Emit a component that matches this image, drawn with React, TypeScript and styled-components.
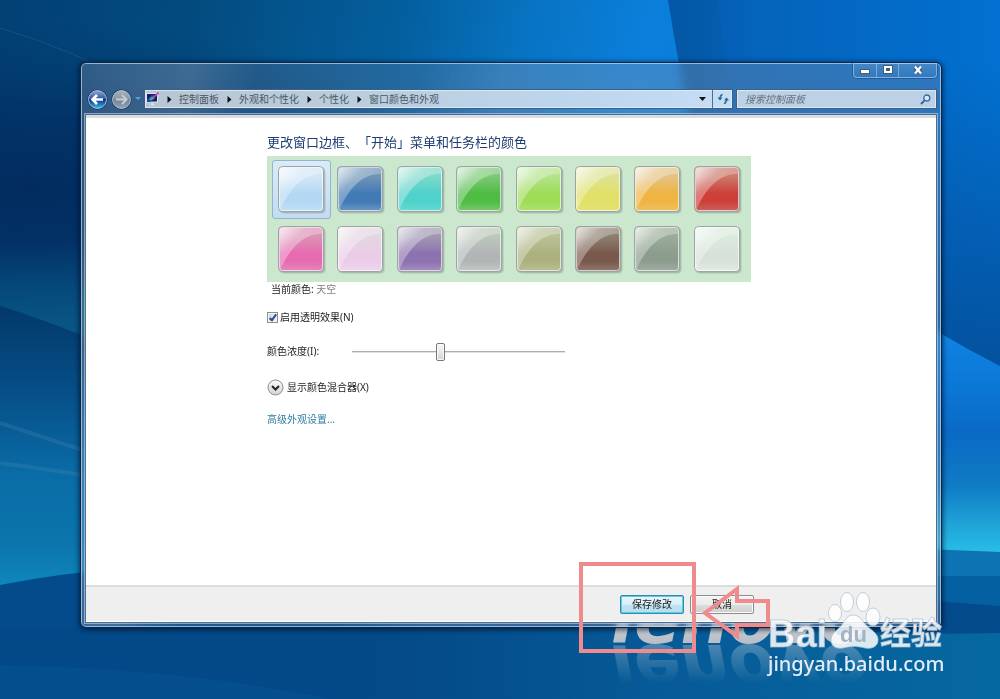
import React, { useState } from 'react';
import styled, { createGlobalStyle } from 'styled-components';

const GlobalStyle = createGlobalStyle`
  *, *::before, *::after { box-sizing: border-box; }
  body {
    margin: 0;
    font-family: "Noto Sans", "Noto Sans CJK SC", sans-serif;
    font-size: 10px;
    line-height: 14px;
    color: #1c1c1c;
  }
  button, input { font: inherit; color: inherit; }
`;

const Desktop = styled.div`
  position: relative;
  display: flex;
  flex-direction: column;
  min-height: 100vh;
  padding: 62px 58px 71px 80px;
  overflow: hidden;
  background: #04508f;
`;

const WallpaperSvg = styled.svg`
  position: absolute;
  inset: 0;
  width: 100%;
  height: 100%;
`;

const Window = styled.main`
  position: relative;
  flex: 1;
  display: flex;
  flex-direction: column;
  padding: 0 4px 4px;
  border: 1px solid #0c2748;
  border-radius: 6px;
  background:
    linear-gradient(98deg, rgba(255, 255, 255, 0.08) 0, rgba(255, 255, 255, 0.14) 110px, rgba(255, 255, 255, 0.01) 175px, rgba(255, 255, 255, 0.02) 340px, rgba(255, 255, 255, 0.1) 420px, rgba(255, 255, 255, 0.06) 100%),
    rgba(100, 120, 150, 0.28);
  backdrop-filter: blur(5px);
  box-shadow:
    inset 0 0 0 1px rgba(190, 220, 245, 0.7),
    0 1px 5px 1px rgba(0, 10, 35, 0.65);
`;

const Caption = styled.div`
  display: flex;
  justify-content: flex-end;
`;

const CaptionGroup = styled.div`
  display: flex;
  border: 1px solid rgba(190, 215, 240, 0.6);
  border-top: 0;
  border-radius: 0 0 4px 4px;
  box-shadow: 0 0 0 1px rgba(10, 40, 90, 0.35);
`;

const CaptionButton = styled.button<{ $wide?: boolean }>`
  display: flex;
  align-items: center;
  justify-content: center;
  width: ${(p) => (p.$wide ? 38 : 22)}px;
  height: 14px;
  padding: 0;
  border: 0;
  background: linear-gradient(rgba(255, 255, 255, 0.12), rgba(255, 255, 255, 0.02));
  & + & { border-left: 1px solid rgba(190, 215, 240, 0.5); }
`;

const NavBar = styled.nav`
  display: flex;
  align-items: center;
  gap: 3px;
  height: 20px;
  margin: 11px 0 5px;
  padding-left: 2px;
`;

const TravelGroup = styled.div`
  display: flex;
  align-items: center;
  gap: 3px;
`;

const TravelButton = styled.button`
  display: flex;
  width: 21px;
  height: 21px;
  padding: 0;
  border: 0;
  background: none;
`;

const RecentButton = styled.button`
  display: flex;
  align-items: center;
  width: 6px;
  height: 20px;
  padding: 0;
  border: 0;
  background: none;
`;

const AddressBar = styled.div`
  flex: 1;
  display: flex;
  align-items: stretch;
  height: 20px;
  padding-left: 1px;
  border: 1px solid #3c5f83;
  background: linear-gradient(90deg, #b7c6d5, #bacddd 35%, #bdd6ee 75%, #c5def6);
  box-shadow: inset 0 0 0 1px rgba(235, 245, 255, 0.65);
`;

const Crumbs = styled.ol`
  flex: 1;
  display: flex;
  align-items: center;
  margin: 0;
  padding: 0;
  list-style: none;
`;

const Crumb = styled.li`
  display: flex;
  align-items: center;
  white-space: nowrap;
`;

const CrumbLink = styled.a`
  color: #4c5864;
  text-decoration: none;
`;

const AddressButton = styled.button<{ $divided?: boolean }>`
  display: flex;
  align-items: center;
  justify-content: center;
  width: 20px;
  padding: 0;
  border: 0;
  border-left: ${(p) => (p.$divided ? '1px solid #4d6f92' : '0')};
  background: none;
`;

const SearchBox = styled.label`
  display: flex;
  align-items: center;
  width: 201px;
  height: 20px;
  padding: 0 5px 0 8px;
  border: 1px solid #3c5f83;
  background: #bdd1e6;
  box-shadow: inset 0 0 0 1px rgba(235, 245, 255, 0.65);
`;

const SearchInput = styled.input`
  flex: 1;
  min-width: 0;
  padding: 0;
  border: 0;
  outline: 0;
  background: none;
  font-style: italic;
  &::placeholder { color: #66727e; opacity: 1; }
`;

const Client = styled.section`
  flex: 1;
  display: flex;
  flex-direction: column;
  border: 1px solid #4f6c8c;
  background: #fff;
  box-shadow: 0 0 0 1px rgba(190, 220, 245, 0.6), inset 0 3px 0 #dbdcde;
`;

const Content = styled.div`
  flex: 1;
  padding: 18px 16px 18px 181px;
`;

const Heading = styled.h1`
  margin: 0 0 5px;
  font-size: 13px;
  font-weight: 400;
  line-height: 18px;
  color: #1d3d72;
  text-spacing-trim: space-all;
`;

const Palette = styled.div`
  display: grid;
  grid-template-columns: repeat(8, 1fr);
  grid-auto-rows: 59px;
  row-gap: 1px;
  max-width: 484px;
  padding: 4px 4px 3px 5px;
  background: #cbe7cd;
`;

const SwatchButton = styled.button<{ $selected: boolean }>`
  display: flex;
  align-items: center;
  justify-content: center;
  width: 59px;
  padding: 0;
  border: 1px solid ${(p) => (p.$selected ? '#8fb5d3' : 'transparent')};
  border-radius: 3px;
  background: ${(p) => (p.$selected ? 'linear-gradient(#dcebf5, #c2dcf0)' : 'none')};
`;

const CurrentColor = styled.p`
  margin: 0 0 13px;
  padding-left: 4px;
`;

const Muted = styled.span`
  color: #808080;
`;

const CheckRow = styled.label`
  display: flex;
  align-items: center;
  gap: 2px;
  width: fit-content;
  height: 16px;
`;

const CheckBox = styled.input`
  display: grid;
  place-items: center;
  appearance: none;
  width: 11px;
  height: 11px;
  margin: 1px 0 0;
  border: 1px solid #8a8f94;
  background: linear-gradient(135deg, #c9d2de, #f3f6fa);
  box-shadow: inset 0 0 0 1px #f4f4f4;
  &:checked::before {
    content: "";
    width: 4px;
    height: 8px;
    margin-bottom: 2px;
    border: solid #2f4c94;
    border-width: 0 2px 2px 0;
    transform: rotate(38deg);
  }
`;

const SliderRow = styled.div`
  display: flex;
  align-items: center;
  height: 18px;
  margin: 17px 0 18px;
`;

const SliderLabel = styled.label`
  width: 85px;
`;

const Slider = styled.input`
  appearance: none;
  width: 213px;
  height: 18px;
  margin: 2px 0 0;
  background: none;
  &::-webkit-slider-runnable-track {
    height: 2px;
    border-top: 1px solid #a9afac;
    background: #dfe4e1;
  }
  &::-webkit-slider-thumb {
    appearance: none;
    width: 9px;
    height: 18px;
    margin-top: -9px;
    border: 1px solid #777;
    border-radius: 2px;
    background: linear-gradient(#f6f6f6, #e9e9e9 50%, #d0d0d0);
    box-shadow: inset 0 0 0 1px #fbfbfb;
  }
`;

const ExpandButton = styled.button`
  display: flex;
  align-items: center;
  gap: 3px;
  height: 18px;
  margin: 0 0 14px;
  padding: 0;
  border: 0;
  background: none;
`;

const AdvancedLink = styled.a`
  display: block;
  width: fit-content;
  line-height: 18px;
  color: #2f7d9f;
  text-decoration: none;
`;

const Footer = styled.footer`
  display: flex;
  align-items: center;
  justify-content: flex-end;
  gap: 6px;
  height: 37px;
  padding-right: 182px;
  border-top: 2px solid #dcdcdc;
  border-bottom: 1px solid #fff;
  background: #efefef;
`;

const DialogButton = styled.button<{ $primary?: boolean }>`
  width: 64px;
  height: 19px;
  padding: 0;
  border: 1px solid ${(p) => (p.$primary ? '#2f8cab' : '#8c8c8c')};
  border-radius: 2px;
  line-height: 14px;
  background: ${(p) =>
    p.$primary
      ? 'linear-gradient(#eaf6fb, #d8eef8 50%, #bfe3f2 50%, #b4def0)'
      : 'linear-gradient(#f3f3f3, #ebebeb 50%, #dddddd 50%, #cfcfcf)'};
  box-shadow: inset 0 0 0 1px ${(p) => (p.$primary ? '#5cc8ea' : '#fafafa')};
`;

const Highlight = styled.div`
  position: absolute;
  right: 304px;
  bottom: 46px;
  width: 117px;
  height: 91px;
  border: 4px solid #f08b8d;
`;

const ArrowSvg = styled.svg`
  position: absolute;
  right: 228px;
  bottom: 57px;
`;

const Watermark = styled.svg`
  position: absolute;
  right: 50px;
  bottom: 14px;
`;

const COLORS = [
  { name: '天空', top: '#d3e7f7', main: '#b4d8f4', low: '#c4e0f6' },
  { name: '黄昏', top: '#6f95b6', main: '#427ab6', low: '#6b98c4' },
  { name: '大海', top: '#7ed9c9', main: '#4fd2cb', low: '#66dad2' },
  { name: '叶', top: '#7cc878', main: '#4fbc43', low: '#7ccb72' },
  { name: '酸橙', top: '#b3e38c', main: '#9fdd58', low: '#aee172' },
  { name: '太阳', top: '#dce394', main: '#e1e068', low: '#e3e37a' },
  { name: '南瓜', top: '#e3c384', main: '#efb442', low: '#ecc264' },
  { name: '红宝石', top: '#cb7a6c', main: '#ce3f3a', low: '#c9655c' },
  { name: '倒挂金钟', top: '#dc93b4', main: '#e76bb0', low: '#e48abb' },
  { name: '腮红', top: '#e3d6e0', main: '#ebcce8', low: '#efd7ec' },
  { name: '紫罗兰', top: '#a298b3', main: '#8d72b0', low: '#a78fc0' },
  { name: '淡紫色', top: '#bcc8bc', main: '#b2b5b6', low: '#c3cbc5' },
  { name: '灰褐', top: '#b9c196', main: '#acb17f', low: '#bcc193' },
  { name: '巧克力', top: '#8c8070', main: '#79594c', low: '#917a6c' },
  { name: '石板', top: '#9aad99', main: '#8c9c8e', low: '#a1b0a2' },
  { name: '霜', top: '#dcebde', main: '#d8e1d9', low: '#e2ece3' },
];

function SwatchTile({ index }: { index: number }) {
  const c = COLORS[index];
  return (
    <svg width="51" height="51" viewBox="-2 -2 51 51" aria-hidden="true">
      <defs>
        <linearGradient id={`fill${index}`} x1="0" y1="0" x2="0" y2="1">
          <stop offset="0" stopColor={c.top} />
          <stop offset="0.22" stopColor={c.top} />
          <stop offset="0.6" stopColor={c.main} />
          <stop offset="0.78" stopColor={c.main} />
          <stop offset="1" stopColor={c.low} />
        </linearGradient>
        <linearGradient id={`gloss${index}`} x1="0" y1="0" x2="0.75" y2="0.75">
          <stop offset="0" stopColor="#fff" stopOpacity="0.8" />
          <stop offset="0.4" stopColor="#fff" stopOpacity="0.34" />
          <stop offset="1" stopColor="#fff" stopOpacity="0.2" />
        </linearGradient>
      </defs>
      <rect x="2" y="2" width="46" height="46" rx="5" fill="#5a6a60" opacity="0.14" />
      <rect x="1" y="1" width="46" height="46" rx="4" fill="#5a6a60" opacity="0.22" />
      <rect x="0.5" y="0.5" width="45" height="45" rx="4" fill={`url(#fill${index})`} stroke="#9ba5a3" />
      <path d="M2 44V4q0-2 2-2h38q2 0 2 2v4C26 7 12 22 2 44Z" fill={`url(#gloss${index})`} />
      <rect x="1.5" y="1.5" width="43" height="43" rx="3" fill="none" stroke="#fff" strokeOpacity="0.65" />
    </svg>
  );
}

function Wallpaper() {
  return (
    <WallpaperSvg viewBox="0 0 1000 699" preserveAspectRatio="none" aria-hidden="true">
      <defs>
        <linearGradient id="sky" gradientUnits="userSpaceOnUse" x1="0" y1="0" x2="980" y2="200">
          <stop offset="0" stopColor="#024074" />
          <stop offset="0.2" stopColor="#034c80" />
          <stop offset="0.4" stopColor="#045f9e" />
          <stop offset="0.52" stopColor="#0873c2" />
          <stop offset="0.64" stopColor="#0b7fdb" />
          <stop offset="1" stopColor="#0875d5" />
        </linearGradient>
        <radialGradient id="night" gradientUnits="userSpaceOnUse" cx="0" cy="0" r="1" gradientTransform="translate(30 190) scale(430 170)">
          <stop offset="0" stopColor="#022c60" />
          <stop offset="0.4" stopColor="#022f64" stopOpacity="0.85" />
          <stop offset="1" stopColor="#02386c" stopOpacity="0" />
        </radialGradient>
        <linearGradient id="band" x1="0" y1="0" x2="1" y2="0">
          <stop offset="0" stopColor="#0457a4" />
          <stop offset="0.25" stopColor="#0560b4" />
          <stop offset="1" stopColor="#0270ce" />
        </linearGradient>
        <linearGradient id="bandFade" x1="0" y1="0" x2="0" y2="1">
          <stop offset="0" stopColor="#04509c" stopOpacity="0" />
          <stop offset="1" stopColor="#04509c" />
        </linearGradient>
        <linearGradient id="leftGlow" x1="0" y1="0" x2="0" y2="1">
          <stop offset="0" stopColor="#0a5a88" stopOpacity="0" />
          <stop offset="1" stopColor="#0a5a88" />
        </linearGradient>
        <linearGradient id="leftSea" gradientUnits="userSpaceOnUse" x1="0" y1="310" x2="0" y2="585">
          <stop offset="0" stopColor="#033a6c" />
          <stop offset="0.3" stopColor="#064f88" />
          <stop offset="0.6" stopColor="#0a6ca6" />
          <stop offset="0.85" stopColor="#0b75ac" />
          <stop offset="1" stopColor="#0f86bb" />
        </linearGradient>
        <linearGradient id="rightSea" gradientUnits="userSpaceOnUse" x1="0" y1="335" x2="0" y2="552">
          <stop offset="0" stopColor="#1083e2" />
          <stop offset="0.22" stopColor="#0b78d6" />
          <stop offset="0.45" stopColor="#0a6ac6" />
          <stop offset="0.7" stopColor="#0f7cc4" />
          <stop offset="0.9" stopColor="#22aadb" />
          <stop offset="1" stopColor="#28bce6" />
        </linearGradient>
        <linearGradient id="hill" x1="0" y1="0" x2="1" y2="0">
          <stop offset="0" stopColor="#034987" />
          <stop offset="0.4" stopColor="#044a88" />
          <stop offset="0.65" stopColor="#065a97" />
          <stop offset="1" stopColor="#0668a0" />
        </linearGradient>
        <linearGradient id="chrome" x1="0" y1="0" x2="0" y2="1">
          <stop offset="0" stopColor="#eef2f5" />
          <stop offset="1" stopColor="#a9b1ba" />
        </linearGradient>
        <linearGradient id="mirror" gradientUnits="userSpaceOnUse" x1="0" y1="0" x2="0" y2="-38">
          <stop offset="0" stopColor="#a9c0d4" stopOpacity="0.42" />
          <stop offset="1" stopColor="#a9c0d4" stopOpacity="0" />
        </linearGradient>
      </defs>
      <rect width="1000" height="699" fill="url(#sky)" />
      <rect width="500" height="400" fill="url(#night)" />
      <path d="M0 28Q70 48 150 92" fill="none" stroke="#4b83ad" strokeOpacity="0.25" />
      <path d="M668 0H1000V380H760Q700 200 668 0Z" fill="url(#band)" />
      <path d="M718 0H1000V380H780Q735 150 718 0Z" fill="#0878e0" opacity="0.14" />
      <rect x="760" y="60" width="240" height="320" fill="url(#bandFade)" />
      <path d="M0 240H120V348L0 306Z" fill="url(#leftGlow)" />
      <path d="M0 306Q40 318 80 335L400 460V600H0Z" fill="url(#leftSea)" />
      <path d="M0 423Q50 440 120 462M0 463Q40 468 120 481" fill="none" stroke="#5c93b4" strokeOpacity="0.22" strokeWidth="4" />
      <path d="M500 130Q860 290 940 333Q970 351 1000 366V560H500Z" fill="url(#rightSea)" />
      <path d="M400 548H900L1000 552V640H400Z" fill="#0d73b2" />
      <path d="M700 576H1000V640H700Z" fill="#0560a2" />
      <path d="M0 585Q60 573 130 568Q560 570 1000 606V699H0Z" fill="#044b8b" />
      <path d="M0 628H820Q900 636 1000 633V699H0Z" fill="url(#hill)" />
      <path d="M0 665Q180 668 330 699H0Z" fill="#065192" opacity="0.7" />
      <g fontFamily="DejaVu Sans" fontWeight="700" fontStyle="italic" fontSize="68" aria-hidden="true">
        <text x="611" y="643" fill="url(#chrome)">lenovo</text>
        <text transform="translate(611 645) scale(1 -1)" fill="url(#mirror)">lenovo</text>
      </g>
    </WallpaperSvg>
  );
}

function TravelIcon({ forward }: { forward?: boolean }) {
  const id = forward ? 'fwd' : 'bck';
  return (
    <svg width="21" height="21" viewBox="0 0 21 21" aria-hidden="true">
      <defs>
        <linearGradient id={id} x1="0" y1="0" x2="0" y2="1">
          <stop offset="0" stopColor={forward ? '#aab4be' : '#8ba6dd'} />
          <stop offset="0.48" stopColor={forward ? '#8795a3' : '#2c50a8'} />
          <stop offset="0.5" stopColor={forward ? '#718395' : '#0b2b86'} />
          <stop offset="1" stopColor={forward ? '#91a5b8' : '#2ec3f4'} />
        </linearGradient>
      </defs>
      <circle cx="10.5" cy="10.5" r="10" fill="#0d2a50" />
      <circle cx="10.5" cy="10.5" r="9" fill={`url(#${id})`} stroke="#c0cfdf" strokeOpacity="0.85" />
      <path
        d={forward ? 'M5 10.5H15M11 6l4.500 4.500L11 15' : 'M16 10.5H6M10 6l-4.500 4.500L10 15'}
        fill="none"
        stroke={forward ? '#c3ccd5' : '#fff'}
        strokeWidth={forward ? 2 : 2.6}
      />
    </svg>
  );
}

function Separator() {
  return (
    <svg width="20" height="9" viewBox="0 0 20 9" aria-hidden="true">
      <path d="M8.5 1v7L12.500 4.500Z" fill="#111" />
    </svg>
  );
}

const CRUMBS = ['控制面板', '外观和个性化', '个性化', '窗口颜色和外观'];

export default function App() {
  const [selected, setSelected] = useState(0);
  return (
    <>
      <GlobalStyle />
      <Desktop>
        <Wallpaper />
        <Window lang="zh-CN">
          <Caption>
            <CaptionGroup>
              <CaptionButton aria-label="最小化">
                <svg width="12" height="10" viewBox="0 0 12 10" aria-hidden="true">
                  <rect x="1.5" y="4.5" width="9" height="4" fill="#fff" stroke="#455a78" />
                </svg>
              </CaptionButton>
              <CaptionButton aria-label="最大化">
                <svg width="12" height="10" viewBox="0 0 12 10" aria-hidden="true">
                  <path d="M1 0h10v9H1Z" fill="#455a78" />
                  <path d="M2 1h8v7H2Z" fill="#fff" />
                  <path d="M4 3h4v3H4Z" fill="#455a78" />
                </svg>
              </CaptionButton>
              <CaptionButton $wide aria-label="关闭">
                <svg width="12" height="10" viewBox="0 0 12 10" aria-hidden="true">
                  <path d="M3 2l6 6M9 2L3 8" stroke="#455a78" strokeWidth="4" />
                  <path d="M3 1.5l6 7M9 1.5L3 8.500" stroke="#fff" strokeWidth="2.2" />
                </svg>
              </CaptionButton>
            </CaptionGroup>
          </Caption>
          <NavBar>
            <TravelGroup>
              <TravelButton aria-label="后退"><TravelIcon /></TravelButton>
              <TravelButton aria-label="前进"><TravelIcon forward /></TravelButton>
              <RecentButton aria-label="最近浏览的位置">
                <svg width="6" height="4" viewBox="0 0 6 4" aria-hidden="true">
                  <path d="M0 0h6L3 3Z" fill="#4aa8dc" />
                </svg>
              </RecentButton>
            </TravelGroup>
            <AddressBar>
              <Crumbs>
                <Crumb>
                  <svg width="13" height="14" viewBox="0 0 13 14" aria-hidden="true">
                    <rect x="0.5" y="1.5" width="11" height="8.500" fill="#1b1766" stroke="#dfe4ee" />
                    <path d="M1 7l5-4h4L4 10H1Z" fill="#2c35c0" />
                    <path d="M3 7.500q3-4 5-2.500t-3 3.500Z" fill="#27c07a" />
                    <path d="M12.500 0.500L7 6" stroke="#d03fb0" strokeWidth="1.6" />
                    <path d="M5 11h3v1.500h2V13.500H3v-1h2Z" fill="#e6ebf0" stroke="#a9b3be" strokeWidth="0.4" />
                  </svg>
                </Crumb>
                {CRUMBS.map((label) => (
                  <Crumb key={label}>
                    <Separator />
                    <CrumbLink href="#">{label}</CrumbLink>
                  </Crumb>
                ))}
              </Crumbs>
              <AddressButton aria-label="以前的位置">
                <svg width="7" height="4" viewBox="0 0 7 4" aria-hidden="true">
                  <path d="M0 0h7L3.500 4Z" fill="#111" />
                </svg>
              </AddressButton>
              <AddressButton $divided aria-label="刷新">
                <svg width="12" height="12" viewBox="0 0 12 12" fill="none" stroke="#2d6896" strokeWidth="1.5" aria-hidden="true">
                  <path d="M5.500 1.500Q3 2 3 6.500M7 10.500Q9.500 10 9.500 5.500" />
                  <path d="M0.500 4.500h5L3 7.500ZM7 7.500h5L9.500 4.500Z" fill="#2d6896" stroke="none" />
                </svg>
              </AddressButton>
            </AddressBar>
            <SearchBox>
              <SearchInput type="search" placeholder="搜索控制面板" aria-label="搜索控制面板" />
              <svg width="11" height="11" viewBox="0 0 11 11" fill="none" aria-hidden="true">
                <circle cx="6.8" cy="4" r="3" fill="#d9e8f5" stroke="#2f6ca6" strokeWidth="1.3" />
                <path d="M4.600 6.400L1 10" stroke="#2f5f96" strokeWidth="1.8" />
              </svg>
            </SearchBox>
          </NavBar>
          <Client>
            <Content>
              <Heading>更改窗口边框、「开始」菜单和任务栏的颜色</Heading>
              <Palette role="group" aria-label="窗口颜色">
                {COLORS.map((c, i) => (
                  <SwatchButton
                    key={c.name}
                    $selected={i === selected}
                    aria-label={c.name}
                    aria-pressed={i === selected}
                    onClick={() => setSelected(i)}
                  >
                    <SwatchTile index={i} />
                  </SwatchButton>
                ))}
              </Palette>
              <CurrentColor>
                当前颜色: <Muted>{COLORS[selected].name}</Muted>
              </CurrentColor>
              <CheckRow>
                <CheckBox type="checkbox" defaultChecked />
                启用透明效果(N)
              </CheckRow>
              <SliderRow>
                <SliderLabel htmlFor="intensity">颜色浓度(I):</SliderLabel>
                <Slider id="intensity" type="range" min={0} max={100} defaultValue={41} />
              </SliderRow>
              <ExpandButton aria-expanded={false}>
                <svg width="17" height="17" viewBox="0 0 17 17" aria-hidden="true">
                  <defs>
                    <linearGradient id="knob" x1="0" y1="0" x2="0" y2="1">
                      <stop offset="0" stopColor="#fcfcfc" />
                      <stop offset="1" stopColor="#d2d2d2" />
                    </linearGradient>
                  </defs>
                  <circle cx="8.5" cy="8.5" r="7.5" fill="url(#knob)" stroke="#8b8b8b" />
                  <path d="M5 7l3.500 3.500L12 7" fill="none" stroke="#222" strokeWidth="2" />
                </svg>
                显示颜色混合器(X)
              </ExpandButton>
              <AdvancedLink href="#">高级外观设置...</AdvancedLink>
            </Content>
            <Footer>
              <DialogButton $primary>保存修改</DialogButton>
              <DialogButton>取消</DialogButton>
            </Footer>
          </Client>
        </Window>
        <Watermark width="190" height="96" viewBox="760 589 190 96" role="img" aria-label="Baidu 经验">
          <g fill="#fff" fillOpacity="0.86" stroke="#a9bccd" strokeOpacity="0.7" strokeWidth="1">
            <ellipse cx="835" cy="613" rx="6.5" ry="8.5" />
            <ellipse cx="847" cy="602" rx="6.5" ry="9.5" />
            <ellipse cx="863" cy="602" rx="6.5" ry="9.5" />
            <ellipse cx="873" cy="617" rx="7" ry="9" />
            <path d="M853 615c8 0 10 8 15 12s11 8 10 14c-1 7-8 8-13 7-8-2-15-2-22 0-6 1-12-1-12-8 0-6 5-9 9-13 5-5 6-12 13-12Z" />
            <text x="768" y="647" fontFamily="Liberation Sans" fontWeight="700" fontSize="38">Bai</text>
            <text x="880" y="644" fontFamily="Noto Sans CJK SC" fontWeight="700" fontSize="31">经验</text>
          </g>
          <text x="840" y="642" fontFamily="Liberation Sans" fontWeight="700" fontSize="22" fill="#a3b3c3">du</text>
          <text x="768" y="671" fontFamily="Noto Sans" fontWeight="500" fontSize="20" fill="#e2edf6">jingyan.baidu.com</text>
        </Watermark>
        <Highlight />
        <ArrowSvg width="72" height="58" viewBox="700 585 72 58" aria-hidden="true">
          <path d="M705 614L737 590V602H768V626H737V637Z" fill="none" stroke="#f08b8d" strokeWidth="4" />
        </ArrowSvg>
      </Desktop>
    </>
  );
}
